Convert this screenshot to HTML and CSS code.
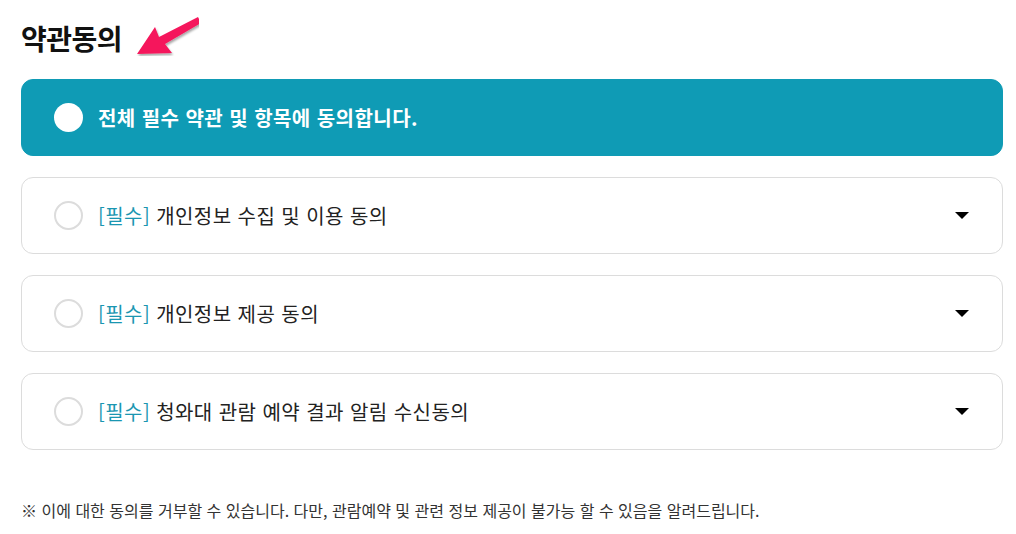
FILE: index.html
```html
<!DOCTYPE html>
<html lang="ko">
<head>
<meta charset="utf-8">
<title>약관동의</title>
<link rel="stylesheet" href="styles.css">
</head>
<body>
<div class="page">
  <header class="head">
    <h2 class="title">약관동의</h2>
    <svg class="pointer" width="80" height="50" viewBox="0 0 80 50" aria-hidden="true">
      <defs>
        <filter id="sh" x="-20%" y="-20%" width="140%" height="160%">
          <feDropShadow dx="1" dy="2" stdDeviation="1.2" flood-color="#000" flood-opacity="0.35"/>
        </filter>
      </defs>
      <polygon filter="url(#sh)" fill="#f5195c" points="18,48 36,21 40,31 79,11 82,17 46,38 53,47"/>
    </svg>
  </header>

  <div class="list">
    <div class="item all">
      <span class="radio filled"></span>
      <span class="label strong">전체 필수 약관 및 항목에 동의합니다.</span>
    </div>
    <div class="item">
      <span class="radio"></span>
      <span class="label"><em class="req">[필수]</em> 개인정보 수집 및 이용 동의</span>
      <span class="caret"></span>
    </div>
    <div class="item">
      <span class="radio"></span>
      <span class="label"><em class="req">[필수]</em> 개인정보 제공 동의</span>
      <span class="caret"></span>
    </div>
    <div class="item">
      <span class="radio"></span>
      <span class="label"><em class="req">[필수]</em> 청와대 관람 예약 결과 알림 수신동의</span>
      <span class="caret"></span>
    </div>
  </div>

  <p class="note">※ 이에 대한 동의를 거부할 수 있습니다. 다만, 관람예약 및 관련 정보 제공이 불가능 할 수 있음을 알려드립니다.</p>
</div>
</body>
</html>
```

FILE: styles.css
```css
* { box-sizing: border-box; }
html, body { margin: 0; padding: 0; background: #fff; }
body {
  font-family: "Noto Sans CJK KR", "Noto Sans", sans-serif;
  color: #222;
}
.page {
  width: 1016px;
  height: 534px;
  padding: 0 13px 0 21px;
  overflow: hidden;
}
.head {
  height: 79px;
  display: flex;
  align-items: flex-start;
  position: relative;
}
.title {
  margin: 0;
  padding-top: 18px;
  font-size: 28px;
  font-weight: 700;
  line-height: 40px;
  color: #111;
  letter-spacing: -0.5px;
}
.pointer {
  position: absolute;
  left: 98px;
  top: 6px;
}
.list {
  display: flex;
  flex-direction: column;
  gap: 21px;
}
.item {
  height: 77px;
  border: 1px solid #dcdcdc;
  border-radius: 12px;
  display: flex;
  align-items: center;
  padding: 0 33px 0 32px;
  background: #fff;
}
.item.all {
  background: #0f9bb5;
  border-color: #0f9bb5;
}
.radio {
  width: 29px;
  height: 29px;
  border-radius: 50%;
  border: 2px solid #dcdcdc;
  background: #fff;
  flex: none;
}
.radio.filled { border: none; }
.label {
  flex: 1;
  margin-left: 15px;
  font-size: 20px;
  line-height: 28px;
  letter-spacing: 0.45px;
  color: #222;
}
.label.strong {
  color: #fff;
  font-weight: 700;
}
.req {
  font-style: normal;
  color: #1a96b1;
}
.caret {
  width: 0;
  height: 0;
  border-left: 7px solid transparent;
  border-right: 7px solid transparent;
  border-top: 7px solid #000;
  flex: none;
}
.note {
  margin: 48px 0 0;
  font-size: 16px;
  line-height: 24px;
  color: #333;
}
```
